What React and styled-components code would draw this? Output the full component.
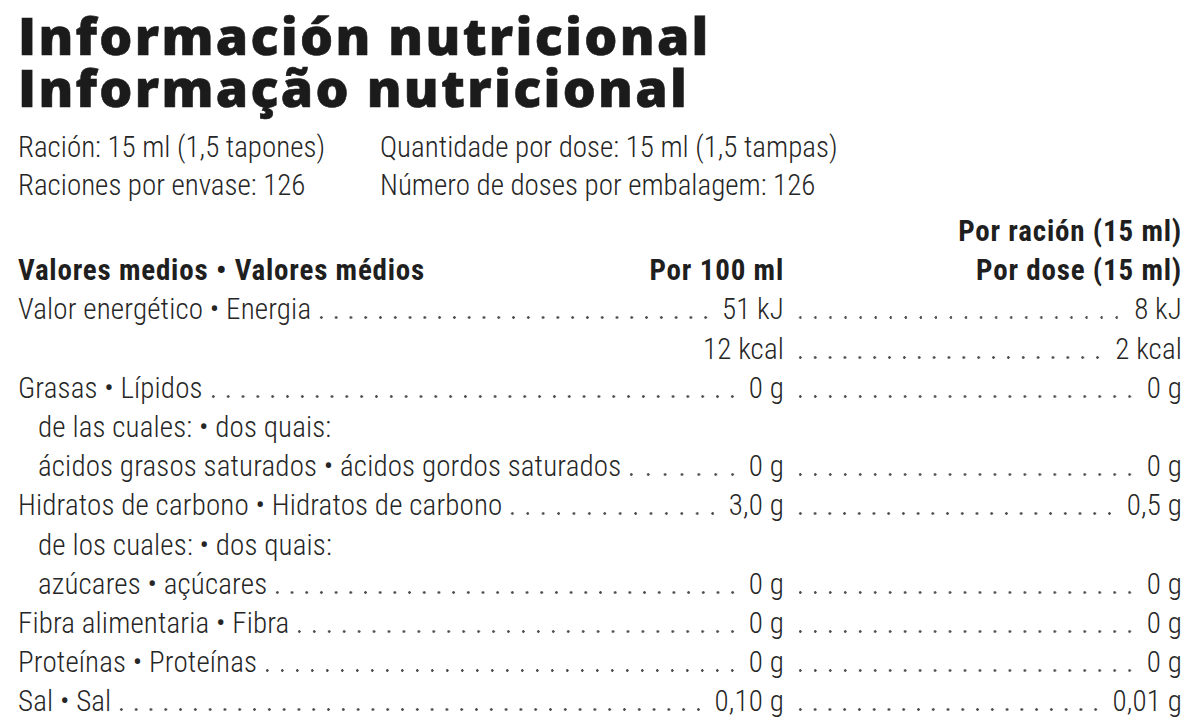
import React from "react";
import styled, { createGlobalStyle } from "styled-components";

const GlobalStyle = createGlobalStyle`
  html, body { margin: 0; padding: 0; background: #ffffff; }
  body { color: #262626; }
`;

const Page = styled.main`
  box-sizing: border-box;
  width: 1200px;
  padding: 9px 18px 0 18px;
  font-family: "Roboto Condensed", "Liberation Sans", sans-serif;
  font-weight: 300;
`;

const Title = styled.h1`
  margin: 0;
  font-family: "Open Sans", "DejaVu Sans", sans-serif;
  font-weight: 800;
  font-size: 52px;
  line-height: 52px;
  letter-spacing: 2.3px;
  color: #1b1b1b;
  -webkit-text-stroke: 0.6px #1b1b1b;
  white-space: nowrap;
`;

const TitleLine = styled.span`
  display: block;
`;

const Serving = styled.section`
  display: grid;
  grid-template-columns: 362px 1fr;
  margin-top: 15px;
  font-size: 29px;
  line-height: 38px;
  white-space: nowrap;
`;

const Table = styled.section`
  margin-top: 8px;
  font-size: 29px;
  line-height: 39.2px;
`;

const Row = styled.div`
  display: grid;
  grid-template-columns: 1fr 398px;
  white-space: nowrap;
  font-weight: ${(p) => (p.$head ? 700 : 300)};
  letter-spacing: ${(p) => (p.$head ? "0.8px" : "0.15px")};
  color: ${(p) => (p.$head ? "#1f1f1f" : "#262626")};
`;

const Cell = styled.div`
  display: flex;
  align-items: baseline;
  justify-content: flex-end;
  min-width: 0;
`;

const Label = styled.span`
  margin-right: auto;
  padding-left: ${(p) => (p.$indent ? "20px" : "0")};
`;

const Leader = styled.span`
  flex: 1;
  height: 3px;
  margin: 0 ${(p) => p.$end || "9px"} 0 ${(p) => p.$start || "3px"};
  background-image: radial-gradient(circle, #505050 1.05px, rgba(80, 80, 80, 0) 1.6px);
  background-size: 14.7px 3px;
  background-repeat: space no-repeat;
  background-position: right center;
`;

const Value = styled.span`
  text-align: right;
`;

const rows = [
  { label: "Valor energético • Energia", a: "51 kJ", b: "8 kJ" },
  { label: null, a: "12 kcal", b: "2 kcal" },
  { label: "Grasas • Lípidos", a: "0 g", b: "0 g" },
  { label: "de las cuales: • dos quais:", indent: true },
  { label: "ácidos grasos saturados • ácidos gordos saturados", indent: true, a: "0 g", b: "0 g" },
  { label: "Hidratos de carbono • Hidratos de carbono", a: "3,0 g", b: "0,5 g" },
  { label: "de los cuales: • dos quais:", indent: true },
  { label: "azúcares • açúcares", indent: true, a: "0 g", b: "0 g" },
  { label: "Fibra alimentaria • Fibra", a: "0 g", b: "0 g" },
  { label: "Proteínas • Proteínas", a: "0 g", b: "0 g" },
  { label: "Sal • Sal", a: "0,10 g", b: "0,01 g" },
];

export default function App() {
  return (
    <>
      <GlobalStyle />
      <Page>
        <Title>
          <TitleLine>Información nutricional</TitleLine>
          <TitleLine>Informação nutricional</TitleLine>
        </Title>

        <Serving>
          <span>Ración: 15 ml (1,5 tapones)</span>
          <span>Quantidade por dose: 15 ml (1,5 tampas)</span>
          <span>Raciones por envase: 126</span>
          <span>Número de doses por embalagem: 126</span>
        </Serving>

        <Table>
          <Row $head>
            <Cell />
            <Cell>
              <Value>Por ración (15 ml)</Value>
            </Cell>
          </Row>
          <Row $head>
            <Cell>
              <Label>Valores medios • Valores médios</Label>
              <Value>Por 100 ml</Value>
            </Cell>
            <Cell>
              <Value>Por dose (15 ml)</Value>
            </Cell>
          </Row>
          {rows.map((r, i) => (
            <Row key={i}>
              <Cell>
                {r.label && <Label $indent={r.indent}>{r.label}</Label>}
                {r.label && r.a && <Leader />}
                {r.a && <Value>{r.a}</Value>}
              </Cell>
              <Cell>
                {r.b && <Leader $start="9px" $end="10px" />}
                {r.b && <Value>{r.b}</Value>}
              </Cell>
            </Row>
          ))}
        </Table>
      </Page>
    </>
  );
}
